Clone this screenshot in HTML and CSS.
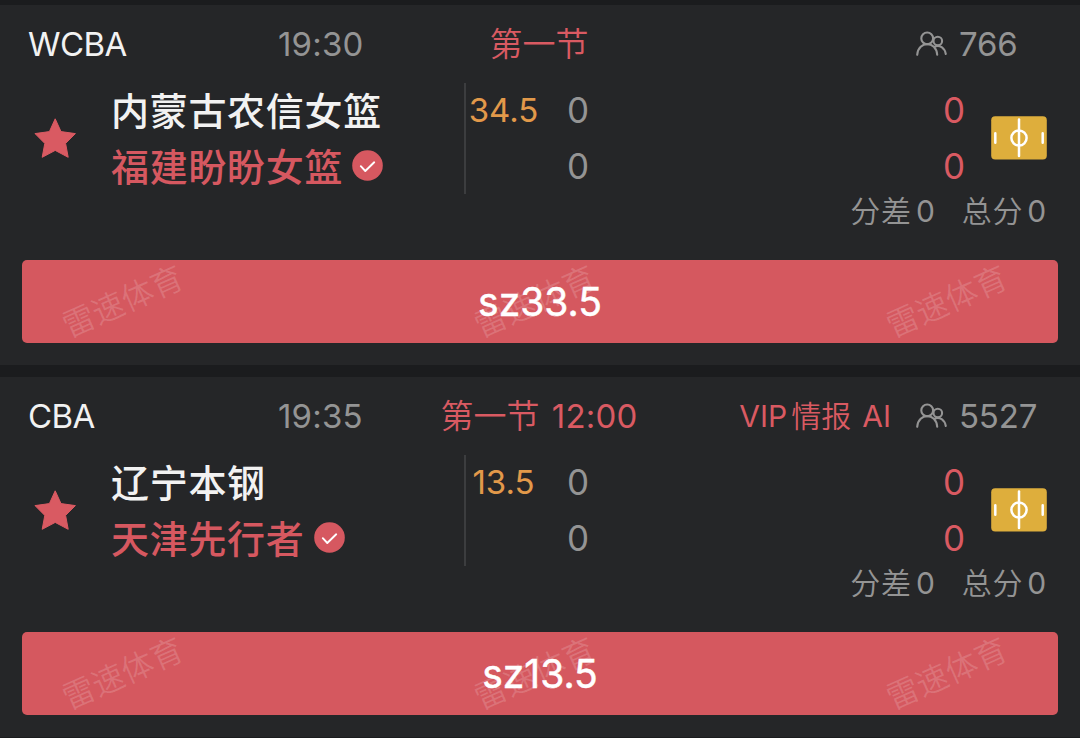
FILE: index.html
```
<!DOCTYPE html>
<html lang="zh-CN">
  <head>
    <meta charset="UTF-8" />
    <meta name="viewport" content="width=device-width, initial-scale=1.0" />
    <title>篮球比分</title>
    <link rel="stylesheet" href="styles.css">
  </head>
  <body>
    <!-- shared icons -->
    <svg class="icons" width="0" height="0">
      <symbol id="star" viewBox="0 0 42 41">
        <path d="M21.2 0.8 L27 13.6 L41.4 15.6 L31.6 25.4 L34.2 39.3 L21.2 32.4 L8.2 39.3 L10.8 25.4 L1 15.6 L15.4 13.6 Z" fill="#d95a62" stroke="#d95a62" stroke-width="1" stroke-linejoin="round" />
      </symbol>
      <symbol id="check" viewBox="0 0 31 31">
        <circle cx="15.5" cy="15.5" r="15.3" fill="#d65860" />
        <path d="M8.8 16.2 L13.3 21 L22.2 12.3" fill="none" stroke="#fff" stroke-width="1.9" stroke-linecap="round" stroke-linejoin="round" />
      </symbol>
      <symbol id="people" viewBox="0 0 32 26">
        <g fill="none" stroke="#949494" stroke-width="2.1" stroke-linecap="round">
          <circle cx="11.2" cy="7.4" r="5.9" />
          <path d="M1.2 23.8 C2.4 9.6 20.2 9.6 21.2 23.8" />
          <circle cx="21.8" cy="10" r="4.3" />
          <path d="M18.8 15.6 C23.5 13.4 28.8 17 29.8 23" />
        </g>
      </symbol>
      <symbol id="court" viewBox="0 0 56 44">
        <rect x="0.2" y="0.2" width="55.6" height="43.4" rx="4" fill="#deae3c" />
        <g fill="none" stroke="#fff" stroke-width="2.5" stroke-linecap="round">
          <circle cx="28" cy="22" r="7.6" />
          <path d="M28 3.5 V40" />
          <path d="M4.3 17.3 V26.7 M51.7 17.3 V26.7" />
        </g>
      </symbol>
    </svg>

    <div class="match">
      <div class="head">
        <span class="league">WCBA</span>
        <span class="time">19:30</span>
        <span class="stage">第一节</span>
        <span class="vip"></span>
        <span class="viewers"><svg><use href="#people" /></svg>766</span>
      </div>
      <div class="info">
        <svg class="star"><use href="#star" /></svg>
        <div class="teams">
          <p>内蒙古农信女篮</p>
          <p class="picked">福建盼盼女篮<svg><use href="#check" /></svg></p>
        </div>
        <div class="odds">34.5</div>
        <div class="quarter"><p>0</p><p>0</p></div>
        <div class="score"><p>0</p><p>0</p></div>
        <svg class="court"><use href="#court" /></svg>
      </div>
      <div class="total"><span>分差<b>0</b></span><span>总分<b>0</b></span></div>
      <div class="tip">
        <div class="marks"><i>雷速体育</i><i>雷速体育</i><i>雷速体育</i></div>
        <span>sz33.5</span>
      </div>
    </div>

    <div class="match">
      <div class="head">
        <span class="league">CBA</span>
        <span class="time">19:35</span>
        <span class="stage">第一节 <em>12:00</em></span>
        <span class="vip">VIP<em>情报</em>AI</span>
        <span class="viewers"><svg><use href="#people" /></svg>5527</span>
      </div>
      <div class="info">
        <svg class="star"><use href="#star" /></svg>
        <div class="teams">
          <p>辽宁本钢</p>
          <p class="picked">天津先行者<svg><use href="#check" /></svg></p>
        </div>
        <div class="odds">13.5</div>
        <div class="quarter"><p>0</p><p>0</p></div>
        <div class="score"><p>0</p><p>0</p></div>
        <svg class="court"><use href="#court" /></svg>
      </div>
      <div class="total"><span>分差<b>0</b></span><span>总分<b>0</b></span></div>
      <div class="tip">
        <div class="marks"><i>雷速体育</i><i>雷速体育</i><i>雷速体育</i></div>
        <span>sz13.5</span>
      </div>
    </div>
  </body>
</html>
```
FILE: styles.css
```
* {
  box-sizing: border-box;
}
body {
  margin: 0;
  padding-top: 5px;
  height: 738px;
  overflow: hidden;
  background-color: #1b1c1e;
  font-family: Inter, "Noto Sans CJK SC", sans-serif;
  color: #f2f2f2;
}
p {
  margin: 0;
}
em,
i,
b {
  font-style: normal;
  font-weight: inherit;
}
.icons {
  display: block;
}
.match {
  height: 360px;
  margin-bottom: 12px;
  padding: 14px 22px 0;
  background-color: #252628;
}
.head {
  display: grid;
  grid-template-columns: 248px 149px 226px 251px 1fr;
  height: 50px;
  padding-left: 7px;
  line-height: 50px;
  font-size: 33px;
  white-space: nowrap;
}
.league {
  margin-left: -1px;
  letter-spacing: -0.6px;
}
.time,
.viewers {
  color: #949494;
}
.time {
  padding-left: 1px;
  letter-spacing: 0.2px;
}
.stage {
  color: #d95a62;
  text-align: center;
  font-weight: 350;
}
.stage em {
  margin-left: 3px;
  font-weight: 400;
  letter-spacing: 0.2px;
}
.vip {
  display: flex;
  justify-content: flex-end;
  padding-right: 12px;
  font-size: 30px;
  color: #d95a62;
}
.vip em {
  margin: 0 11px 0 4px;
  font-weight: 350;
}
.viewers {
  display: flex;
  align-items: center;
  padding-left: 13px;
  letter-spacing: -0.2px;
}
.viewers svg {
  width: 32px;
  height: 26px;
  margin-right: 11px;
}
.info {
  display: flex;
  height: 111px;
  margin-top: 14px;
  line-height: 55.5px;
}
.star {
  width: 42px;
  height: 41px;
  margin: 35px 35px 0 12px;
}
.teams {
  width: 355px;
  padding-top: 1px;
  font-size: 38px;
  font-weight: 500;
  letter-spacing: 0.7px;
  border-right: 2px solid #3c3d3f;
}
.picked {
  display: flex;
  align-items: center;
  color: #d65860;
}
.picked svg {
  width: 31px;
  height: 31px;
  margin: 0 0 4px 9px;
}
.odds {
  width: 75px;
  text-align: center;
  font-size: 33px;
  color: #e2994a;
}
.quarter,
.score {
  width: 74px;
  text-align: center;
  font-size: 35px;
  color: #949494;
}
.score {
  color: #d95a62;
  margin-left: auto;
}
.court {
  width: 56px;
  height: 44px;
  margin: 33px 11px 0 0;
}
.total {
  display: flex;
  justify-content: flex-end;
  height: 36px;
  gap: 26px;
  padding-right: 11px;
  line-height: 34px;
  font-size: 30px;
  font-weight: 350;
  letter-spacing: 0.8px;
  color: #949494;
}
.total b {
  margin-left: 4px;
  font-weight: 400;
}
.tip {
  position: relative;
  display: flex;
  justify-content: center;
  align-items: center;
  height: 83px;
  margin-top: 30px;
  border-radius: 5px;
  background-color: #d5585f;
  font-size: 39px;
  color: #fff;
}
.tip span {
  position: relative;
  -webkit-text-stroke: 0.5px #fff;
}
.marks {
  position: absolute;
  left: 37px;
  top: 27px;
  display: flex;
  gap: 284px;
  line-height: 30px;
  font-size: 32px;
  font-weight: 350;
  color: rgba(255, 255, 255, 0.16);
}
.marks i {
  width: 128px;
  text-align: center;
  white-space: nowrap;
  transform: rotate(-24deg);
}
```
